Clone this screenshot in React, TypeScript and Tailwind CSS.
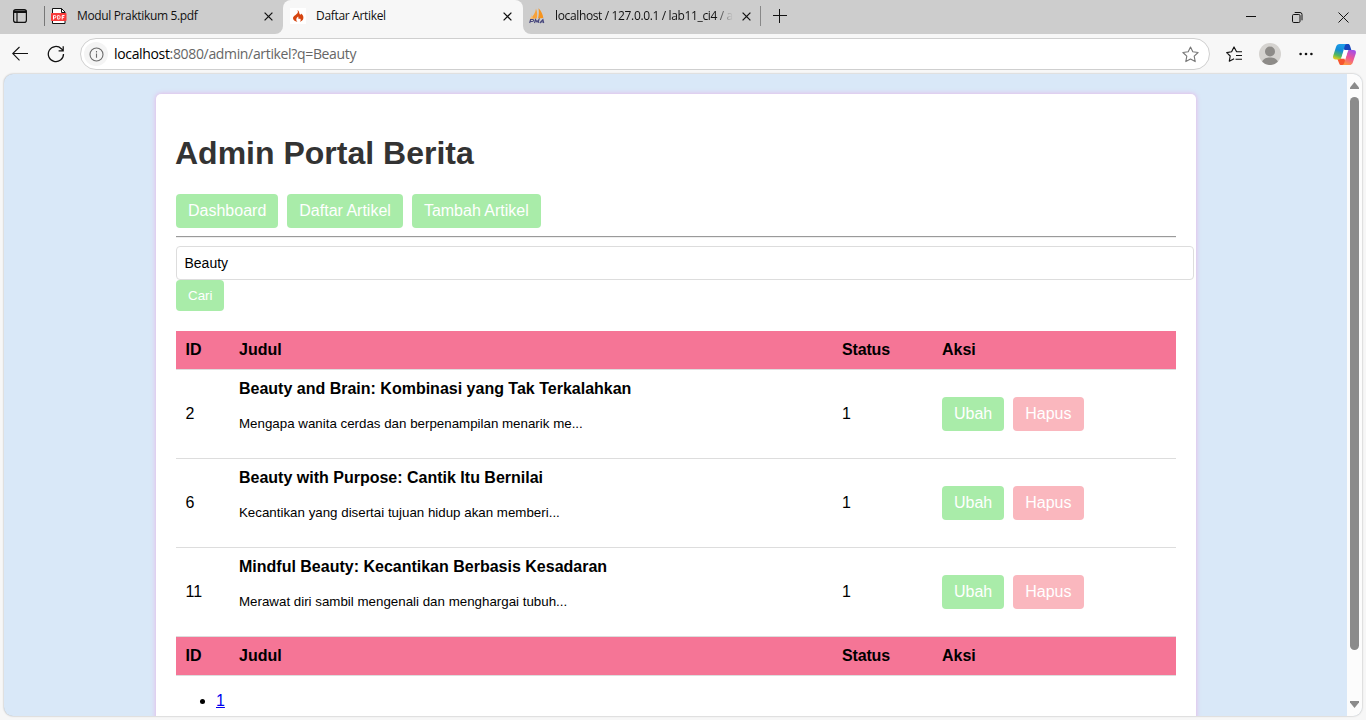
import React from "react";

const rows = [
  { id: 2, title: "Beauty and Brain: Kombinasi yang Tak Terkalahkan", text: "Mengapa wanita cerdas dan berpenampilan menarik me..." },
  { id: 6, title: "Beauty with Purpose: Cantik Itu Bernilai", text: "Kecantikan yang disertai tujuan hidup akan memberi..." },
  { id: 11, title: "Mindful Beauty: Kecantikan Berbasis Kesadaran", text: "Merawat diri sambil mengenali dan menghargai tubuh..." },
];

function CloseIcon() {
  return (
    <svg width="9" height="9" viewBox="0 0 9 9" className="shrink-0" fill="none" stroke="#111" strokeWidth="1.25">
      <path d="M.6.6l7.8 7.8M8.4.6L.6 8.4" />
    </svg>
  );
}

function PdfIcon() {
  return (
    <svg width="16" height="16" viewBox="0 0 16 16" className="shrink-0">
      <path d="M1.5.5h9l3.5 3.5v11.5H1.5z" fill="#fff" stroke="#111" />
      <path d="M10.5 .5V4.5h3.5" fill="none" stroke="#111" />
      <rect x="0" y="5" width="15.5" height="8" rx=".8" fill="#f83b3b" />
      <g fill="none" stroke="#fff" strokeWidth="1">
        <path d="M2.5 11.5v-4h1.2a1.2 1.2 0 0 1 0 2.4H2.5" />
        <path d="M6.7 7.5v3.6h.9c2 0 2-3.6 0-3.6zM11.2 11.5v-4h2.3M11.2 9.3h2" />
      </g>
    </svg>
  );
}

function FlameIcon() {
  return (
    <svg width="16" height="16" viewBox="0 0 16 16" className="shrink-0">
      <rect width="16" height="16" fill="#fff" />
      <path d="M7.4 2c2.4 1.5 1.5 3.4 2.6 4.4.6.5 1.3.1 1.1-.8 1.6 1.2 2.5 2.9 2.3 4.4-.2 2-1.7 3.4-3.8 3.9 1.5-1.1 1.5-2.7.1-3.7.1.9-.6 1.2-1.1.6-.4-.6 0-1.4-.4-2.2-1.3 1-2 2.1-1.9 3.3.1.8.5 1.5 1.1 2-2.6-.4-4.6-1.9-4.4-3.8.2-2.6 4.2-3.7 4.8-5.7.2-.8.1-1.6-.4-2.4z" fill="#d64510" />
    </svg>
  );
}

function SailIcon() {
  return (
    <svg width="16" height="16" viewBox="0 0 16 16" className="shrink-0">
      <path d="M7 .7C8.5 4 8.4 7 7.7 10.5L1 10.8C4.3 8.1 6.3 5 7 .7z" fill="#f7a23b" />
      <path d="M9.5.3c2.6 2.5 4.4 6 4.8 9.8L9 10.5c.9-3.4 1.1-6.8.5-10.2z" fill="#f7941d" />
      <path d="M2.5 5.5C3 7 2.2 9 .8 10.5h3z" fill="#f2c184" />
      <g fill="none" stroke="#47477d" strokeWidth="1.15">
        <path d="M.7 15l.9-3.5h2c1.6 0 1.2 2-.3 2H1.1M5.5 15l1-3.4 1.4 2.2 2-2.2-.7 3.4M10.8 15l3.1-3.4.8 3.4M12 14h2.5" />
      </g>
    </svg>
  );
}

function Tab({ children, icon, fade }: { children: React.ReactNode; icon: React.ReactNode; fade?: boolean }) {
  return (
    <>
      {icon}
      <span className={fade ? "ml-[10px] min-w-0 flex-1 whitespace-nowrap [mask-image:linear-gradient(to_right,black_90%,transparent_100%)]" : "ml-[10px] min-w-0 flex-1 whitespace-nowrap"}>
        {children}
      </span>
    </>
  );
}

function TabStrip() {
  return (
    <div className="flex h-[34px] bg-[#f7f7f7] text-[12px] leading-[16px] text-[#111]">
      <div className="flex w-[283px] items-center rounded-br-[8px] bg-[#cdcdcd] pl-[13px] pr-[10px] pb-[2px]">
        <svg width="14" height="14" viewBox="0 0 14 14" className="shrink-0" fill="none" stroke="#111" strokeWidth="1.2">
          <rect x=".6" y=".6" width="12.8" height="12.8" rx="2.2" />
          <path d="M.6 2.3h12.8M.6 3.2h12.8" strokeWidth="1.7" />
          <path d="M4 3v10.4" />
        </svg>
        <div className="ml-[17px] mr-[6px] h-[20px] w-px bg-[#777]" />
        <Tab icon={<PdfIcon />}><span className="tracking-[-0.36px]">Modul Praktikum 5.pdf</span></Tab>
        <CloseIcon />
      </div>
      <div className="flex w-[240px] bg-[#cdcdcd]">
        <div className="flex flex-1 items-center rounded-t-[8px] bg-[#f7f7f7] pl-[7px] pr-[11px] pb-[2px]">
          <Tab icon={<FlameIcon />}><span className="tracking-[-0.32px]">Daftar Artikel</span></Tab>
          <CloseIcon />
        </div>
      </div>
      <div className="flex w-[239px] items-center rounded-bl-[8px] bg-[#cdcdcd] pl-[6px] pr-[1px] pb-[2px]">
        <Tab icon={<SailIcon />} fade><span className="tracking-[-0.36px]">localhost / 127.0.0.1 / lab11_ci4 / a</span></Tab>
        <div className="ml-[9px] mr-[9px] flex"><CloseIcon /></div>
        <div className="h-[20px] w-px bg-[#888]" />
      </div>
      <div className="flex flex-1 items-center bg-[#cdcdcd] pl-[11px] pb-[2px]">
        <svg width="14" height="14" viewBox="0 0 14 14" stroke="#111"><path d="M0 6.5h14M6.5 0v14" /></svg>
      </div>
      <div className="flex items-center bg-[#cdcdcd] pr-[17px]">
        <svg width="10" height="11" viewBox="0 0 10 11" stroke="#111"><path d="M0 4.5h10" /></svg>
        <svg width="11" height="11" viewBox="0 0 11 11" fill="none" stroke="#111" className="ml-[36px]">
          <rect x=".5" y="2.5" width="7.5" height="8" rx="1.2" />
          <path d="M2.7 .5H8a2 2 0 0 1 2 2v5.8" />
        </svg>
        <svg width="11" height="11" viewBox="0 0 11 11" stroke="#111" className="ml-[35px]"><path d="M.5.5l10 10M10.5.5l-10 10" /></svg>
      </div>
    </div>
  );
}

function Toolbar() {
  return (
    <div className="flex h-[40px] items-start bg-[#f7f7f7] pt-[4px] pl-[12px] pr-[10px]">
      <div className="flex h-[32px] items-center">
        <svg width="16" height="16" viewBox="0 0 16 16" fill="none" stroke="#111" strokeWidth="1.1"><path d="M16 7.5H.8M7.5 1L.7 7.5l6.8 6.8" /></svg>
        <svg width="18" height="18" viewBox="0 0 18 18" fill="none" stroke="#111" strokeWidth="1.25" className="ml-[19px]"><path d="M16.5 9a7.6 7.6 0 1 1-2.2-5.3L16 5.6M16.2 1.2v4.6h-4.6" /></svg>
      </div>
      <div className="ml-[15px] flex h-[32px] w-[1130px] items-center rounded-full border border-[#cfcfcf] bg-white pl-[3px] pr-[10px]">
        <div className="flex size-[24px] items-center justify-center rounded-full bg-[#f4f4f4]">
          <svg width="15" height="15" viewBox="0 0 15 15" fill="none" stroke="#6b6b6b" strokeWidth="1.1">
            <circle cx="7.5" cy="7.5" r="6.5" /><path d="M7.5 6.6v4.2M7.5 4v1.4" />
          </svg>
        </div>
        <span className="ml-[6px] flex-1 pb-px text-[14px] leading-[20px] tracking-[-0.34px] text-[#666]">
          <span className="text-black">localhost</span>:8080/admin/artikel?q=Beauty
        </span>
        <svg width="17" height="17" viewBox="0 0 17 17" fill="none" stroke="#777" strokeWidth="1.1" strokeLinejoin="round"><path d="M8.5 1l2.3 4.8 5.3.7-3.9 3.7 1 5.4-4.7-2.6-4.7 2.6 1-5.4L.9 6.5l5.3-.7z" /></svg>
      </div>
      <div className="flex h-[32px] flex-1 items-center justify-end">
        <svg width="17" height="17" viewBox="0 0 17 17" fill="none" stroke="#111" strokeWidth="1.15" strokeLinejoin="round">
          <path d="M16 5.7h-5.4L8 .9 5.6 5.8l-4.9.8L4.2 10l-.9 5.2 4.8-2.5M10 9.5h6M9.5 13.2H16" />
        </svg>
        <svg width="22" height="22" viewBox="0 0 22 22" className="ml-[16px]">
          <circle cx="11" cy="11" r="11" fill="#d5d3d0" />
          <circle cx="11" cy="8.5" r="5" fill="#8d8b88" />
          <path d="M3.2 18.8c1.3-5.7 14.3-5.7 15.6 0A11 11 0 0 1 3.2 18.8z" fill="#8d8b88" />
        </svg>
        <svg width="14" height="4" viewBox="0 0 14 4" fill="#111" className="ml-[18px]"><circle cx="1.6" cy="2" r="1.3" /><circle cx="7" cy="2" r="1.3" /><circle cx="12.4" cy="2" r="1.3" /></svg>
        <svg width="23" height="21" viewBox="0 0 23 21" className="ml-[20px]">
          <defs>
            <linearGradient id="cpa" x1=".6" y1="0" x2=".3" y2="1"><stop offset="0" stopColor="#209ee8" /><stop offset=".4" stopColor="#118cd8" /><stop offset=".75" stopColor="#57b85a" /><stop offset="1" stopColor="#e5cc1c" /></linearGradient>
            <linearGradient id="cpb" x1=".7" y1="0" x2=".3" y2="1"><stop offset="0" stopColor="#a34ee8" /><stop offset=".5" stopColor="#ee5596" /><stop offset="1" stopColor="#ff983f" /></linearGradient>
          </defs>
          <path d="M10 0h5c1 0 1.7.7 2 1.7L18.5 6.5h-7z" fill="#1746bd" />
          <path d="M4.2 14.5h7.3L13 21H8.2c-1 0-1.6-.6-2-1.6z" fill="#f6562f" />
          <path d="M6.7 0h7c-1.2.3-1.7 1.2-2.1 2.4L8.6 13.1c-.4 1.4-1.2 2.4-2.6 2.4H2.6C.4 15.5-.4 14 .2 11.8L3 2.9C3.6 1 4.7 0 6.7 0z" fill="url(#cpa)" />
          <path d="M17 6h3.3c2.2 0 3.1 1.4 2.4 3.7l-2.8 8.5c-.6 1.9-1.6 2.8-3.6 2.8H9.2c1.2-.2 1.8-1.1 2.1-2.3l3.2-10.5C14.9 6.9 15.7 6 17 6z" fill="url(#cpb)" />
          <path d="M11.2 6h4.2c-.6.5-.8 1.2-1.1 2.2l-1.9 6.3H8.1c.3-.4.5-.9.7-1.5z" fill="#fff" />
        </svg>
      </div>
    </div>
  );
}

function Button({ children, danger }: { children: React.ReactNode; danger?: boolean }) {
  return (
    <a className={danger ? "block h-[34px] w-[71px] rounded-[4px] bg-[#fab7be] px-[12px] text-[16px] leading-[34px] text-white" : "block h-[34px] rounded-[4px] bg-[#a9eca9] px-[12px] text-[16px] leading-[34px] text-white"}>
      {children}
    </a>
  );
}

function HeadRow() {
  return (
    <div className="grid h-[39px] grid-cols-[53.4px_603px_100px_1fr] border-b border-[#ddd] bg-[#f57596] text-[16px] leading-[37px] font-bold *:pl-[9.6px]">
      <div>ID</div><div>Judul</div><div className="tracking-[-0.15px]">Status</div><div>Aksi</div>
    </div>
  );
}

function Card() {
  return (
    <main className="ml-[152px] mt-[20px] h-[700px] w-[1040px] rounded-[5px] bg-white px-[20px] pt-[41px] shadow-[0_0_5px_rgba(255,90,200,0.4)]">
      <h1 className="-ml-px h-[37px] text-[32px] leading-[37px] font-bold text-[#333]">Admin Portal Berita</h1>
      <nav className="mt-[22px] flex gap-[9px]">
        <Button>Dashboard</Button><Button>Daftar Artikel</Button><Button>Tambah Artikel</Button>
      </nav>
      <div className="mt-[8px] h-[2px] border-t border-b border-t-[#9a9a9a] border-b-[#eee]" />
      <div className="mt-[8px] h-[34px] w-[1018px] rounded-[4px] border border-[#ddd] px-[7.5px] text-[14px] leading-[32px] text-black">Beauty</div>
      <button className="block h-[31px] rounded-[4px] bg-[#a9eca9] px-[12px] text-[13.33px] leading-[31px] text-white">Cari</button>
      <div className="mt-[20px]">
        <HeadRow />
        {rows.map((r, i) => (
          <div key={r.id} className={i === 2 ? "grid h-[88px] grid-cols-[53.4px_603px_100px_1fr] items-center text-[16px] leading-[18px] *:pl-[9.6px]" : "grid h-[89px] grid-cols-[53.4px_603px_100px_1fr] items-center border-b border-[#ddd] text-[16px] leading-[18px] *:pl-[9.6px]"}>
            <div>{r.id}</div>
            <div className="self-start pt-[10px]">
              <div className="font-bold">{r.title}</div>
              <p className="mt-[18px] text-[13.33px] leading-[15px]">{r.text}</p>
            </div>
            <div>1</div>
            <div className="flex gap-[9px]"><Button>Ubah</Button><Button danger>Hapus</Button></div>
          </div>
        ))}
        <div className="h-px bg-[#ddd]" />
        <HeadRow />
      </div>
      <ul className="mt-[15px] list-disc pl-[40px] text-[16px] leading-[19px]">
        <li><a className="text-[#0000ee] underline">1</a></li>
      </ul>
    </main>
  );
}

export default function App() {
  return (
    <div className="flex h-[720px] w-[1366px] flex-col overflow-hidden bg-[#f7f7f7] font-['Open_Sans',sans-serif]">
      <TabStrip />
      <Toolbar />
      <div className="mx-[4px] flex h-[642px] overflow-hidden rounded-[9px] bg-[#d9e8f8] font-['Liberation_Sans',Arial,sans-serif] text-black shadow-[0_0_2px_rgba(0,0,0,0.35)]">
        <div className="flex-1 overflow-hidden"><Card /></div>
        <div className="flex w-[15px] flex-col items-center bg-[#fcfcfc] pt-[8px] pb-[8px]">
          <svg width="9" height="7" viewBox="0 0 9 7" fill="#8b8b8b"><path d="M4.5 0L9 5.6V7H0V5.6z" /></svg>
          <div className="mt-[8px] h-[553px] w-[9px] rounded-full bg-[#8b8b8b]" />
          <div className="flex-1" />
          <svg width="9" height="7" viewBox="0 0 9 7" fill="#8b8b8b"><path d="M4.5 7L9 1.4V0H0v1.4z" /></svg>
        </div>
      </div>
    </div>
  );
}
